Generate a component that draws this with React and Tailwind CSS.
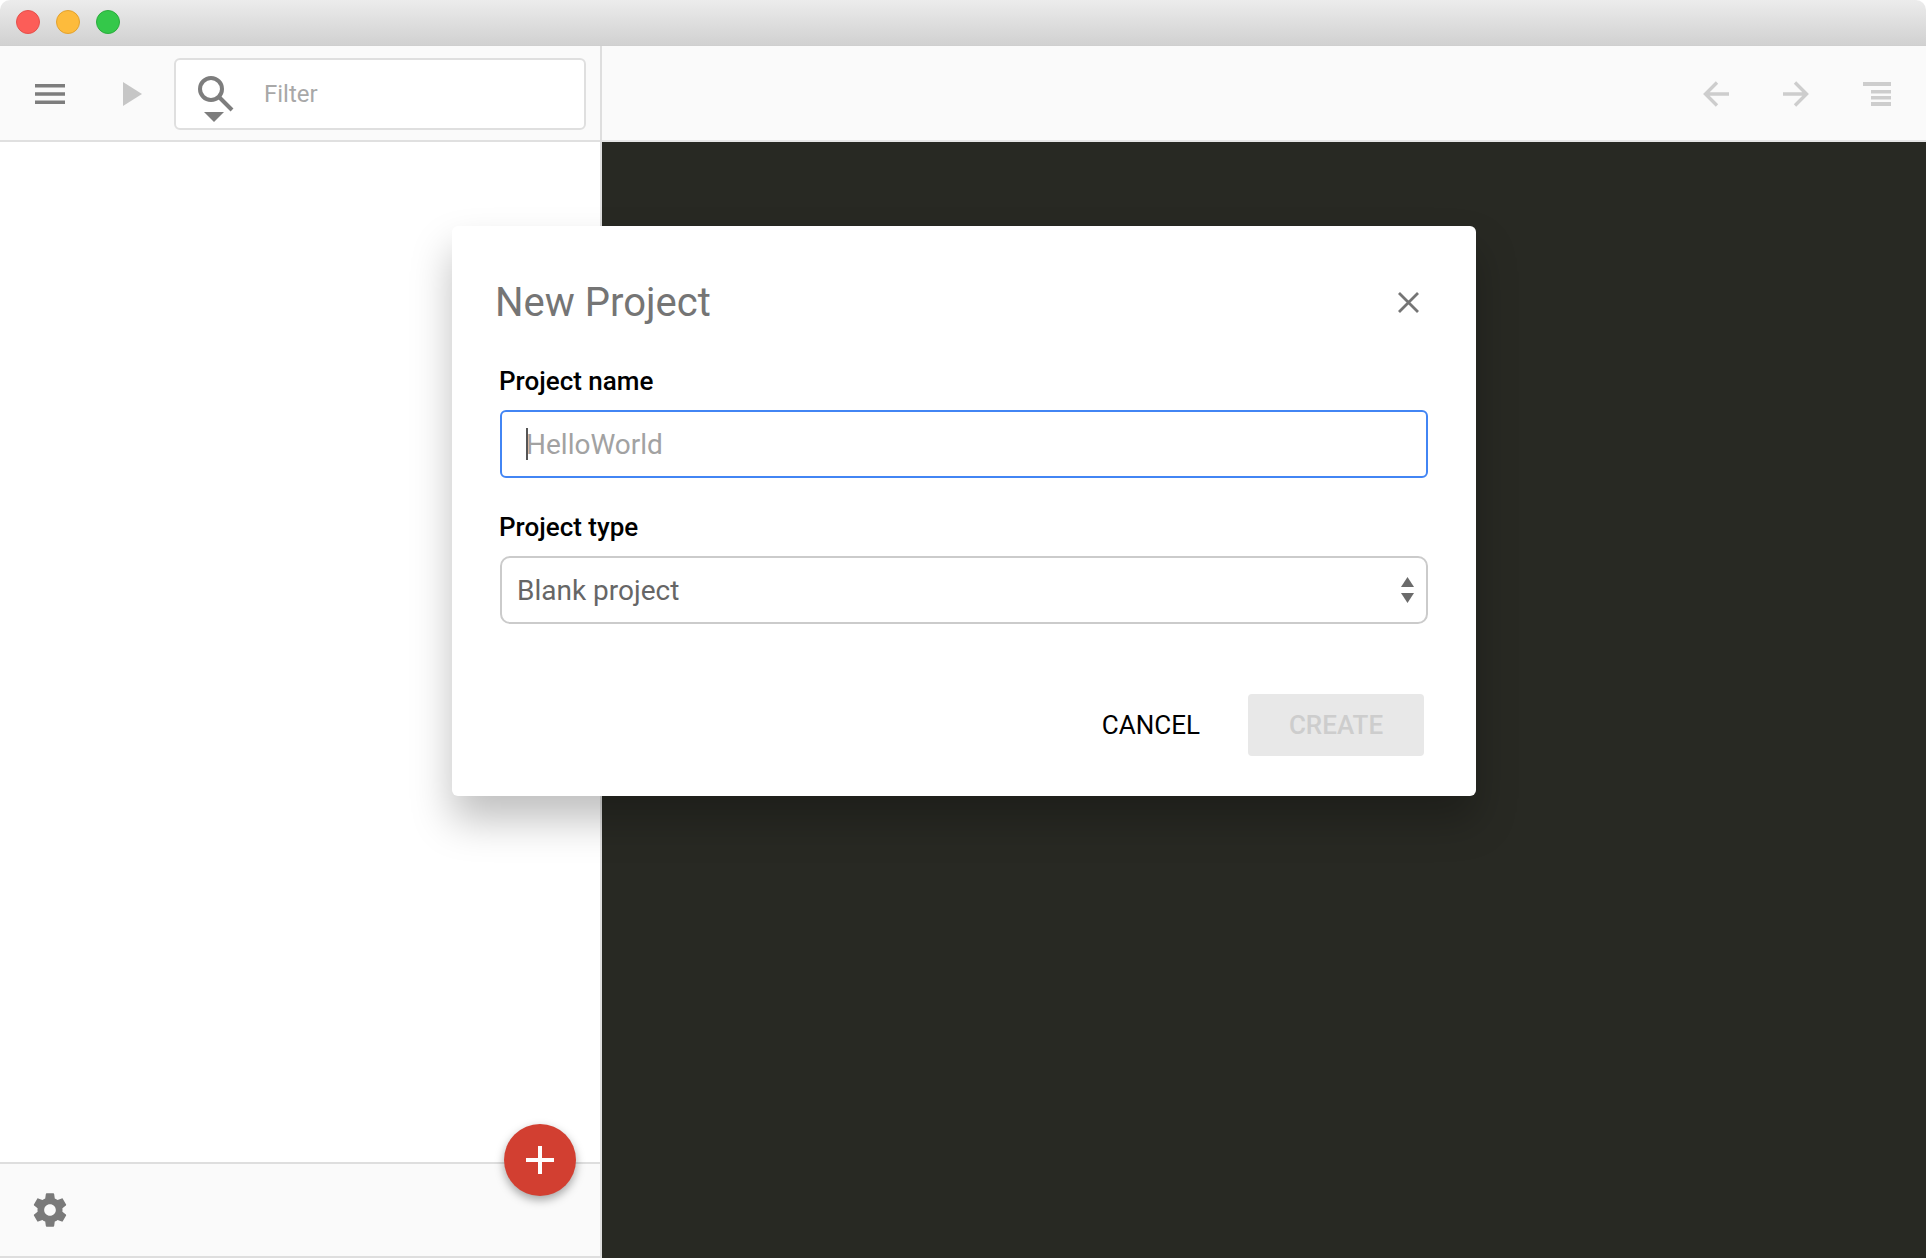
const font = { fontFamily: "Roboto, sans-serif" };

function TrafficLights() {
  return (
    <div className="flex gap-4 pl-4 pt-[10px]">
      <span className="w-6 h-6 rounded-full bg-[#fc5d58] border border-[#e5504b]" />
      <span className="w-6 h-6 rounded-full bg-[#fdbb3c] border border-[#e3a22e]" />
      <span className="w-6 h-6 rounded-full bg-[#34c84a] border border-[#2bac3d]" />
    </div>
  );
}

function SearchIcon() {
  return (
    <svg width="36" height="48" viewBox="0 0 36 48" className="shrink-0 mt-[10px]">
      <circle cx="13" cy="14" r="11" fill="none" stroke="#7d7d7d" strokeWidth="4" />
      <path d="M21 22l13 13" stroke="#7d7d7d" strokeWidth="4" fill="none" />
      <path d="M6 37h20l-10 10z" fill="#7d7d7d" />
    </svg>
  );
}

function SelectArrows() {
  return (
    <svg width="13" height="26" viewBox="0 0 13 26" className="absolute right-[14px] top-[21px] pointer-events-none">
      <path d="M6.5 0L13 10H0z" fill="#6b6b6b" />
      <path d="M0 16h13L6.5 26z" fill="#6b6b6b" />
    </svg>
  );
}

function NewProjectDialog() {
  return (
    <div className="absolute left-[452px] top-[226px] w-[1024px] h-[570px] bg-white rounded-md shadow-[0_24px_40px_rgba(0,0,0,0.25)] px-12 pt-[54px]">
      <div className="flex items-center justify-between h-[46px]">
        <h2 className="-ml-[5px] text-[40px] leading-[46px] font-normal text-[#757575]">New Project</h2>
        <svg width="21" height="21" viewBox="0 0 21 21" className="mr-[9px] mb-[2px]">
          <path d="M1 1l19 19M20 1L1 20" stroke="#757575" strokeWidth="2.8" fill="none" />
        </svg>
      </div>

      <label className="block -ml-[1px] mt-[39px] text-[26px] leading-[32px] font-medium text-black">Project name</label>
      <div className="relative mt-[13px]">
        <input
          readOnly
          placeholder="HelloWorld"
          className="block w-full h-[68px] pl-[24px] pr-4 rounded-md border-2 border-[#4285f4] bg-white text-[28px] placeholder:text-[#a2a2a2] outline-none"
          style={font}
        />
        <span className="absolute left-[26px] top-[18px] w-[2px] h-[32px] bg-[#555]" />
      </div>

      <label className="block -ml-[1px] mt-[33px] text-[26px] leading-[32px] font-medium text-black">Project type</label>
      <div className="relative mt-[13px]">
        <select
          defaultValue="blank"
          className="block w-full h-[68px] pl-[15px] pr-10 pt-[2px] rounded-[10px] border-2 border-[#cbcbcb] bg-white text-[28px] text-[#666] outline-none appearance-none"
          style={font}
        >
          <option value="blank">Blank project</option>
        </select>
        <SelectArrows />
      </div>

      <div className="flex items-center justify-end gap-[48px] mt-[70px] pr-[4px]">
        <button className="text-[26px] leading-[32px] text-black">CANCEL</button>
        <button disabled className="w-[176px] h-[62px] rounded-[4px] bg-[#e8e8e8] text-[26px] font-medium text-[#cdcdcd]">
          CREATE
        </button>
      </div>
    </div>
  );
}

export default function App() {
  return (
    <div className="relative h-screen w-full bg-white overflow-hidden flex flex-col" style={font}>
      <div className="h-[46px] shrink-0 rounded-t-[10px] bg-gradient-to-b from-[#ececec] to-[#d1d1d1] border-b border-[#cfcfcf]">
        <TrafficLights />
      </div>

      <div className="flex flex-1 min-h-0">
        <aside className="relative w-[602px] shrink-0 flex flex-col border-r-2 border-[#dedede] bg-white">
          <div className="h-[96px] shrink-0 flex items-center pt-[2px] pl-[35px] bg-[#fafafa] border-b-2 border-[#e0e0e0]">
            <svg width="30" height="20" viewBox="0 0 30 20" className="shrink-0">
              <path d="M0 0h30v3.4H0zM0 8.3h30v3.4H0zM0 16.6h30V20H0z" fill="#7d7d7d" />
            </svg>
            <svg width="19" height="24" viewBox="0 0 19 24" className="ml-[58px] shrink-0">
              <path d="M0 0l19 12L0 24z" fill="#c6c6c6" />
            </svg>
            <div className="ml-[32px] w-[412px] h-[72px] flex items-center pl-[22px] rounded-md border-2 border-[#dfdfdf] bg-white">
              <SearchIcon />
              <input
                readOnly
                placeholder="Filter"
                className="ml-[30px] flex-1 min-w-0 bg-transparent text-[24px] placeholder:text-[#a8a8a8] outline-none"
                style={font}
              />
            </div>
          </div>

          <div className="flex-1" />

          <div className="h-[96px] shrink-0 flex items-center pl-[30px] bg-[#fafafa] border-t-2 border-b-2 border-[#dedede]">
            <svg width="40" height="40" viewBox="0 0 24 24">
              <path
                fill="#7a7a7a"
                d="M19.43 12.98c.04-.32.07-.64.07-.98s-.03-.66-.07-.98l2.11-1.65c.19-.15.24-.42.12-.64l-2-3.46c-.12-.22-.39-.3-.61-.22l-2.49 1c-.52-.4-1.08-.73-1.69-.98l-.38-2.65C14.46 2.18 14.25 2 14 2h-4c-.25 0-.46.18-.49.42l-.38 2.65c-.61.25-1.17.59-1.69.98l-2.49-1c-.23-.09-.49 0-.61.22l-2 3.46c-.13.22-.07.49.12.64l2.11 1.65c-.04.32-.07.65-.07.98s.03.66.07.98l-2.11 1.65c-.19.15-.24.42-.12.64l2 3.46c.12.22.39.3.61.22l2.49-1c.52.4 1.08.73 1.69.98l.38 2.65c.03.24.24.42.49.42h4c.25 0 .46-.18.49-.42l.38-2.65c.61-.25 1.17-.59 1.69-.98l2.49 1c.23.09.49 0 .61-.22l2-3.46c.12-.22.07-.49-.12-.64l-2.11-1.65zM12 15.5c-1.93 0-3.5-1.57-3.5-3.5s1.57-3.5 3.5-3.5 3.5 1.57 3.5 3.5-1.57 3.5-3.5 3.5z"
              />
            </svg>
          </div>

          <button className="absolute left-[504px] bottom-[62px] w-[72px] h-[72px] rounded-full bg-[#d23f31] shadow-[0_4px_10px_rgba(0,0,0,0.35)] flex items-center justify-center">
            <svg width="28" height="28" viewBox="0 0 28 28">
              <path d="M12 0h4v12h12v4H16v12h-4V16H0v-4h12z" fill="#fff" />
            </svg>
          </button>
        </aside>

        <main className="flex-1 min-w-0 flex flex-col bg-[#282923]">
          <div className="h-[96px] shrink-0 flex items-center justify-end gap-[54px] pt-[2px] pr-[35px] bg-[#fafafa] border-b-2 border-[#e6e6e6]">
            <svg width="26" height="26" viewBox="0 0 26 26">
              <path d="M26 13H3M14 1.500L2.500 13 14 24.500" stroke="#cdcdcd" strokeWidth="3.400" fill="none" />
            </svg>
            <svg width="26" height="26" viewBox="0 0 26 26">
              <path d="M0 13h23M12 1.500L23.500 13 12 24.500" stroke="#cdcdcd" strokeWidth="3.400" fill="none" />
            </svg>
            <svg width="28" height="24" viewBox="0 0 28 24">
              <path d="M0 0h28v4H0zM8 8h20v3.500H8zM8 14h20v3.500H8zM8 20h20v4H8z" fill="#cdcdcd" />
            </svg>
          </div>
        </main>
      </div>

      <NewProjectDialog />
    </div>
  );
}
